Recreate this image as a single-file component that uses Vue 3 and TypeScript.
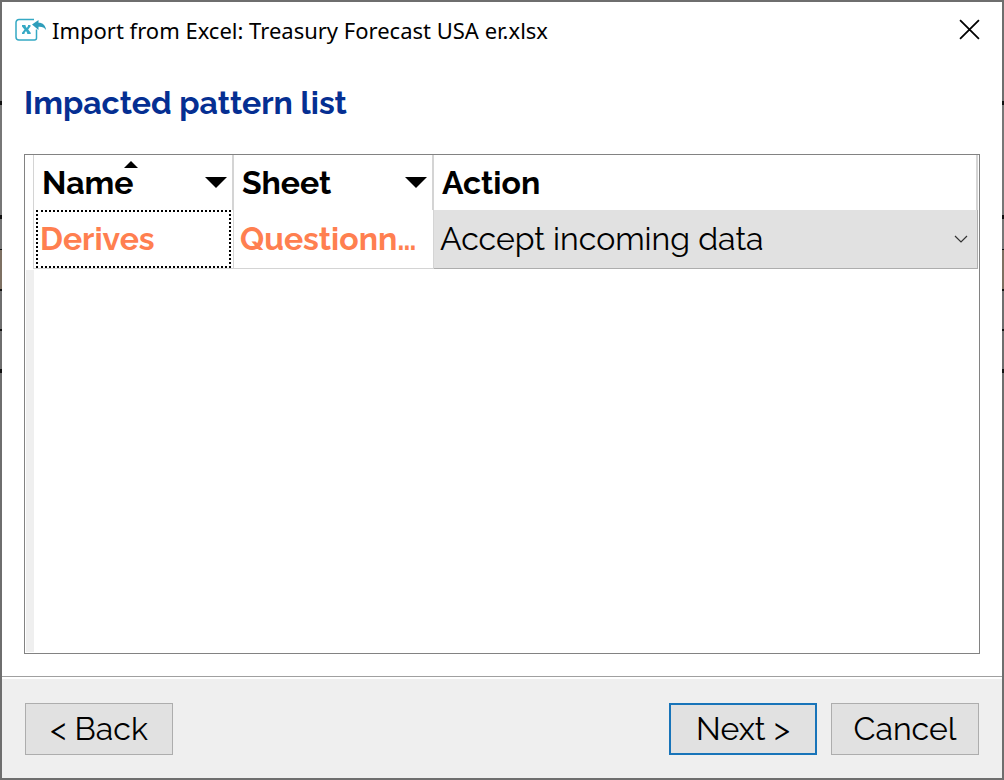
<script setup lang="ts">
import { ref } from 'vue'

interface Pattern {
  name: string
  sheet: string
  action: string
}

const fileName = 'Treasury Forecast USA er.xlsx'
const actions = ['Accept incoming data', 'Keep existing data']
const patterns = ref<Pattern[]>([
  { name: 'Derives', sheet: 'Questionn…', action: 'Accept incoming data' },
])
</script>

<template>
  <div class="window">
    <div class="dialog" role="dialog" aria-labelledby="dialog-title">
      <header class="titlebar">
        <svg class="app-icon" viewBox="0 0 32 24" aria-hidden="true">
          <path d="M19 1.500H4a3 3 0 0 0-3 3V19a3 3 0 0 0 3 3h15.500a2 2 0 0 0 2-2v-8.500" fill="none" stroke="#35a9c4" stroke-width="1.500" />
          <path d="M7 7h3.500v1l1.300 2 1.200-2V7h2.500v1.500l-2.300 3 2.500 3.200V16h-3.500v-1l-1.200-2-1.500 2v1H7v-1.300l2.500-3.200L7 8.500z" fill="#35a9c4" />
          <path d="M17 6.500L23.500 2v2.800c4.500 0 7 2.700 7.500 7.200-1.800-2.500-4-3.500-7.500-3.200V12z" fill="#2e9dba" />
        </svg>
        <span id="dialog-title" class="title">Import from Excel: {{ fileName }}</span>
        <button class="close" type="button" aria-label="Close">
          <svg viewBox="0 0 20 20" aria-hidden="true">
            <path d="M1 1l18 18M19 1L1 19" stroke="#000" stroke-width="1.700" />
          </svg>
        </button>
      </header>

      <main class="content">
        <h1>Impacted pattern list</h1>
        <div class="grid">
          <table>
            <colgroup>
              <col class="col-marker" />
              <col class="col-name" />
              <col class="col-sheet" />
              <col />
            </colgroup>
            <thead>
              <tr>
                <td class="marker"></td>
                <th scope="col" aria-sort="ascending">
                  <div class="head">
                    <span>Name</span>
                    <svg class="sort" viewBox="0 0 14 7" aria-hidden="true"><path d="M7 0l7 7H0z" /></svg>
                    <button class="filter" type="button" aria-label="Filter by name">
                      <svg viewBox="0 0 22 11" aria-hidden="true"><path d="M0 0h22L11 11z" /></svg>
                    </button>
                  </div>
                </th>
                <th scope="col">
                  <div class="head">
                    <span>Sheet</span>
                    <button class="filter" type="button" aria-label="Filter by sheet">
                      <svg viewBox="0 0 22 11" aria-hidden="true"><path d="M0 0h22L11 11z" /></svg>
                    </button>
                  </div>
                </th>
                <th scope="col"><div class="head"><span>Action</span></div></th>
              </tr>
            </thead>
            <tbody>
              <tr v-for="pattern in patterns" :key="pattern.name">
                <td class="marker"></td>
                <td class="cell"><div class="value focused">{{ pattern.name }}</div></td>
                <td class="cell"><div class="value">{{ pattern.sheet }}</div></td>
                <td>
                  <div class="combo">
                    <select v-model="pattern.action" :aria-label="`Action for ${pattern.name}`">
                      <option v-for="action in actions" :key="action">{{ action }}</option>
                    </select>
                    <svg class="chevron" viewBox="0 0 14 8" aria-hidden="true">
                      <path d="M1 1l6 6 6-6" fill="none" stroke="#333" stroke-width="1.200" />
                    </svg>
                  </div>
                </td>
              </tr>
            </tbody>
          </table>
          <div class="gutter"></div>
        </div>
      </main>

      <footer class="actions">
        <button type="button">&lt; Back</button>
        <button class="primary" type="button">Next &gt;</button>
        <button type="button">Cancel</button>
      </footer>
    </div>
  </div>
</template>

<style>
html,
body {
  margin: 0;
}
</style>

<style scoped>
* {
  box-sizing: border-box;
}

.window {
  min-height: 100vh;
  padding: 2px;
  display: flex;
  background: linear-gradient(
    #6e6e6e 101px, #111 101px, #111 105px,
    #777 105px, #777 215px, #111 215px, #111 219px,
    #777 219px, #777 249px, #111 249px, #111 250px,
    #7d7062 250px, #7d7062 289px, #111 289px, #111 291px,
    #6e6e6e 291px, #6e6e6e 329px, #111 329px, #111 331px,
    #6e6e6e 331px, #6e6e6e 369px, #111 369px, #111 373px,
    #6e6e6e 373px
  );
  font-family: Raleway, Lato, "Open Sans", sans-serif;
  font-size: 32px;
  line-height: 40px;
  color: #000;
}

.dialog {
  flex: 1;
  min-width: 0;
  display: flex;
  flex-direction: column;
  background: #fff;
}

.titlebar {
  display: flex;
  align-items: center;
  height: 56px;
  padding: 0 22px 0 13px;
  font: 22px/32px "Segoe UI", "Noto Sans", sans-serif;
}

.app-icon {
  width: 32px;
  height: 24px;
  margin-right: 5px;
}

.title {
  flex: 1;
  white-space: nowrap;
}

.close {
  display: flex;
  padding: 0 0 2px;
  border: 0;
  background: none;
}

.close svg {
  width: 21px;
  height: 21px;
}

.content {
  flex: 1;
  display: flex;
  flex-direction: column;
  padding: 25px 22px 22px;
}

h1 {
  margin: 0 0 31px;
  font-size: 32px;
  line-height: 40px;
  font-weight: 700;
  color: #052f92;
}

.grid {
  flex: 1;
  display: flex;
  flex-direction: column;
  padding: 0 1px;
  border: 1px solid #828282;
}

table {
  width: 100%;
  table-layout: fixed;
  border-collapse: separate;
  border-spacing: 0;
}

.col-marker {
  width: 8px;
}

.col-name,
.col-sheet {
  width: 200px;
}

td,
th {
  padding: 0;
  text-align: left;
}

.marker,
th {
  border-right: 1px solid #d4d4d4;
}

th {
  height: 55px;
  border-right-width: 2px;
}

.head {
  position: relative;
  display: flex;
  align-items: center;
  justify-content: space-between;
  padding: 0 5px 0 8px;
}

.sort {
  position: absolute;
  top: -2px;
  left: 0;
  right: 4px;
  width: 14px;
  height: 7px;
  margin: 0 auto;
}

.filter {
  display: flex;
  padding: 0;
  border: 0;
  background: none;
}

.filter svg {
  width: 22px;
  height: 11px;
}

.cell {
  padding: 0 2px;
  border-right: 1px solid #d4d4d4;
  border-bottom: 1px solid #d4d4d4;
  font-weight: 700;
  color: #ff7f50;
}

.value {
  height: 58px;
  padding: 0 2px;
  border: 2px dotted transparent;
  line-height: 54px;
  white-space: nowrap;
}

.focused {
  border-color: #000;
}

.combo {
  position: relative;
}

select {
  display: block;
  width: 100%;
  height: 59px;
  padding: 0 40px 0 6px;
  appearance: none;
  border: solid #adadad;
  border-width: 0 1px 1px 0;
  border-radius: 0;
  background: #e1e1e1;
  font: inherit;
  font-weight: 400;
  color: #000;
}

.chevron {
  position: absolute;
  top: 25px;
  right: 10px;
  width: 14px;
  height: 8px;
  pointer-events: none;
}

.gutter {
  flex: 1;
  width: 8px;
  margin: 1px 0;
  background: #efefef;
}

.actions {
  display: flex;
  gap: 14px;
  padding: 26px 23px 23px;
  border-top: 1px solid #a0a0a0;
  box-shadow: inset 0 2px #fff;
  background: #efefef;
}

.actions button {
  width: 148px;
  height: 52px;
  padding: 0;
  border: 1px solid #adadad;
  background: #e1e1e1;
  font: inherit;
  font-weight: 400;
  color: #000;
}

.actions .primary {
  margin-left: auto;
  border: 2px solid #1874b9;
}
</style>
